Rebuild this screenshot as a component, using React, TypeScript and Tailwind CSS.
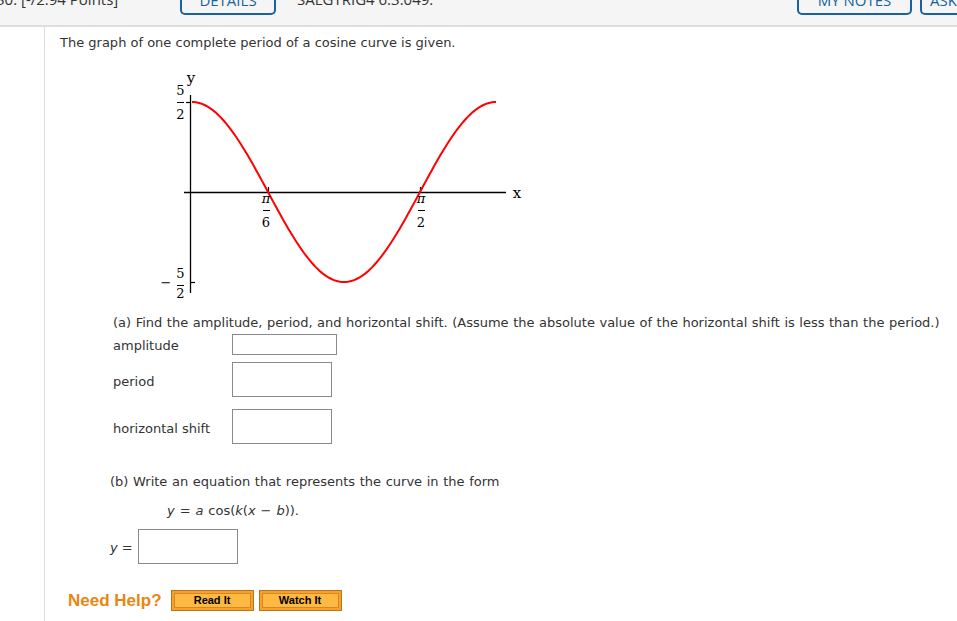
import React from "react";

const curvePath = (() => {
  const pts: string[] = [];
  const x0 = 192;
  const per = 304;
  for (let i = 0; i <= 152; i++) {
    const x = x0 + (per * i) / 152;
    const y = 192 - 90 * Math.cos((2 * Math.PI * i) / 152);
    pts.push(`${i === 0 ? "M" : "L"}${x.toFixed(2)} ${y.toFixed(2)}`);
  }
  return pts.join(" ");
})();

function Graph() {
  const serif = { fontFamily: '"DejaVu Serif", "Liberation Serif", serif' };
  return (
    <svg width={380} height={235} viewBox="150 65 380 235" className="block ml-[90px] mt-[14px]">
      <line x1={190.5} y1={95} x2={190.5} y2={293} stroke="#000" strokeWidth={1.3} />
      <line x1={184} y1={192.5} x2={506} y2={192.5} stroke="#000" strokeWidth={1.3} />
      <line x1={186} y1={102.5} x2={190} y2={102.5} stroke="#000" strokeWidth={1.2} />
      <line x1={191} y1={282.5} x2={195} y2={282.5} stroke="#000" strokeWidth={1.2} />
      <line x1={268.5} y1={187} x2={268.5} y2={192} stroke="#000" strokeWidth={1.2} />
      <line x1={420.5} y1={187} x2={420.5} y2={192} stroke="#000" strokeWidth={1.2} />
      <path d={curvePath} fill="none" stroke="#ff0000" strokeWidth={2} />
      <g style={serif} fontSize={13} fill="#000" textAnchor="middle">
        <text x={191} y={83} fontSize={15}>y</text>
        <text x={180.5} y={95}>5</text>
        <line x1={177} y1={102.5} x2={184} y2={102.5} stroke="#000" strokeWidth={1} />
        <text x={180.5} y={119}>2</text>
        <text x={166} y={287}>−</text>
        <text x={180.5} y={278}>5</text>
        <line x1={177} y1={285.5} x2={184} y2={285.5} stroke="#000" strokeWidth={1} />
        <text x={180.5} y={298}>2</text>
        <text x={266} y={203} fontStyle="italic">π</text>
        <line x1={263} y1={210.5} x2={270} y2={210.5} stroke="#000" strokeWidth={1} />
        <text x={266} y={227}>6</text>
        <text x={421} y={203} fontStyle="italic">π</text>
        <line x1={418} y1={210.5} x2={425} y2={210.5} stroke="#000" strokeWidth={1} />
        <text x={421} y={227}>2</text>
        <text x={517} y={198} fontSize={15}>x</text>
      </g>
    </svg>
  );
}

function Box({ w, h }: { w: string; h: string }) {
  return <div className={`${w} ${h} border border-[#8a8a8a] bg-white shrink-0`} />;
}

function HelpBtn({ label, w }: { label: string; w: string }) {
  return (
    <div className={`${w} h-[21px] border border-[#b8731f] bg-[#f6a228] p-[2px] flex`}>
      <div className="flex-1 border border-[#d5862b] bg-[#fdb942] flex items-center justify-center text-[11px] font-bold text-black leading-none" style={{ fontFamily: '"Liberation Sans", Arial, sans-serif' }}>
        {label}
      </div>
    </div>
  );
}

export default function App() {
  const verd = { fontFamily: '"DejaVu Sans", Verdana, sans-serif' };
  return (
    <div className="w-[957px] h-[621px] bg-white overflow-hidden relative">
      <div className="h-[27px] bg-[#f5f5f5] border-b-2 border-[#dedede] flex items-start overflow-hidden text-[#333] text-[15px]" style={{ fontFamily: '"Open Sans", sans-serif' }}>
        <div className="-mt-[11px] -ml-[4px] w-[184px] shrink-0 leading-[20px]">30. [-/2.94 Points]</div>
        <div className="-mt-[10px] w-[96px] h-[25px] border-2 border-[#16639d] rounded-b-[5px] flex items-start justify-center text-[#16639d] leading-[20px] shrink-0">
          <span className="-mt-[2px]">DETAILS</span>
        </div>
        <div className="-mt-[11px] ml-[21px] leading-[20px] w-[500px] shrink-0">SALGTRIG4 6.3.049.</div>
        <div className="-mt-[10px] w-[115px] h-[25px] border-2 border-[#16639d] rounded-b-[5px] flex items-start justify-center text-[#16639d] leading-[20px] shrink-0">
          <span className="-mt-[2px]">MY NOTES</span>
        </div>
        <div className="-mt-[10px] ml-[8px] w-[180px] h-[25px] border-2 border-[#16639d] rounded-b-[5px] flex items-start pl-[8px] text-[#16639d] leading-[20px] shrink-0">
          <span className="-mt-[2px]">ASK YOUR TEACHER</span>
        </div>
      </div>
      <div className="ml-[44px] border-l border-[#dcdcdc] h-[600px] pl-[15px] text-[13px] text-[#333]" style={verd}>
        <div className="pt-[8px] leading-[16px]">The graph of one complete period of a cosine curve is given.</div>
        <Graph />
        <div className="ml-[53px]">
          <div className="mt-[15px] leading-[16px] [word-spacing:0.4px]">(a) Find the amplitude, period, and horizontal shift. (Assume the absolute value of the horizontal shift is less than the period.)</div>
          <div className="mt-[3px] flex items-center">
            <div className="w-[119px] leading-[16px] pt-[2px]">amplitude</div>
            <Box w="w-[105px]" h="h-[21px]" />
          </div>
          <div className="mt-[7px] flex items-center">
            <div className="w-[119px] leading-[16px] pt-[4px]">period</div>
            <Box w="w-[100px]" h="h-[35px]" />
          </div>
          <div className="mt-[12px] flex items-center">
            <div className="w-[119px] leading-[16px] pt-[4px]">horizontal shift</div>
            <Box w="w-[100px]" h="h-[35px]" />
          </div>
        </div>
        <div className="ml-[50px]">
          <div className="mt-[30px] leading-[16px] [word-spacing:0.5px]">(b) Write an equation that represents the curve in the form</div>
          <div className="mt-[13px] ml-[57px] leading-[16px] [word-spacing:0.8px]">
            <i>y</i> = <i>a</i> cos(<i>k</i>(<i>x</i> − <i>b</i>)).
          </div>
          <div className="mt-[10px] flex items-center">
            <div className="w-[28px] leading-[16px] pt-[3px]"><i>y</i> =</div>
            <Box w="w-[100px]" h="h-[35px]" />
          </div>
        </div>
        <div className="mt-[26px] ml-[8px] flex items-center">
          <span className="text-[17px] font-bold text-[#ea8512] leading-[20px]" style={{ fontFamily: '"Liberation Sans", Arial, sans-serif' }}>Need Help?</span>
          <div className="ml-[9px]"><HelpBtn label="Read It" w="w-[83px]" /></div>
          <div className="ml-[5px]"><HelpBtn label="Watch It" w="w-[83px]" /></div>
        </div>
      </div>
    </div>
  );
}
